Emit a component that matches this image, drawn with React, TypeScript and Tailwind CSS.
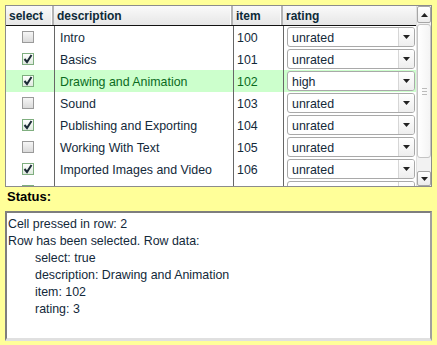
import React from 'react';

type Row = { select: boolean; description: string; item: string; rating: string };

const rows: Row[] = [
  { select: false, description: 'Intro', item: '100', rating: 'unrated' },
  { select: true, description: 'Basics', item: '101', rating: 'unrated' },
  { select: true, description: 'Drawing and Animation', item: '102', rating: 'high' },
  { select: false, description: 'Sound', item: '103', rating: 'unrated' },
  { select: true, description: 'Publishing and Exporting', item: '104', rating: 'unrated' },
  { select: false, description: 'Working With Text', item: '105', rating: 'unrated' },
  { select: true, description: 'Imported Images and Video', item: '106', rating: 'unrated' },
  // last row is cut by the viewport, only its top shows
  { select: true, description: '', item: '', rating: '' },
];

const SELECTED = 2;

function CheckBox({ checked }: { checked: boolean }) {
  return (
    <div
      className={`w-[12px] h-[12px] border flex items-center justify-center ${
        checked
          ? 'border-[#7fae7f] bg-gradient-to-b from-[#ffffff] to-[#dfe9df]'
          : 'border-[#9a9a9a] bg-gradient-to-b from-[#f6f6f6] to-[#dadada]'
      }`}
    >
      {checked && (
        <svg width="10" height="10" viewBox="0 0 10 10">
          <path d="M1.5 5 L4 8 L8.5 1" fill="none" stroke="#1c2b36" strokeWidth="2" />
        </svg>
      )}
    </div>
  );
}

function Arrow({ up = false }: { up?: boolean }) {
  return (
    <svg width="7" height="4" viewBox="0 0 7 4">
      <path d={up ? 'M0 4 L3.5 0 L7 4 Z' : 'M0 0 L7 0 L3.5 4 Z'} fill="#222" />
    </svg>
  );
}

function Combo({ value }: { value: string }) {
  return (
    <div className="h-[20px] ml-[3px] mr-[1px] flex border border-[#a9a9a9] rounded-[3px] bg-white overflow-hidden">
      <div className="flex-1 pl-[4px] pt-[2px] flex items-center">{value}</div>
      <div className="w-[16px] border-l border-[#d6d6d6] bg-gradient-to-b from-[#ffffff] to-[#eeeeee] flex items-center justify-center">
        <Arrow />
      </div>
    </div>
  );
}

function HeaderCell({ label, className }: { label: string; className: string }) {
  return (
    <div className={`${className} h-full flex items-center pl-[3px] pt-[1px] border-r-2 border-r-[#b4b4b4] shadow-[inset_-1px_0_0_#ffffff]`}>
      {label}
    </div>
  );
}

export default function App() {
  return (
    <div
      className="w-[437px] h-[345px] bg-[#ffff99] px-[5px] pt-[5px] flex flex-col text-[12.4px] text-[#13293a] overflow-hidden"
      style={{ fontFamily: '"Liberation Sans", Arial, sans-serif' }}
    >
      <div className="h-[182px] border border-[#8c8c8c] flex bg-white">
        <div className="flex-1 flex flex-col overflow-hidden">
          <div className="h-[20px] shrink-0 flex text-[12px] font-bold text-[#0d2a38] bg-gradient-to-b from-[#fafafa] to-[#e6e6e6] border-b border-b-[#111]">
            <HeaderCell label="select" className="w-[48px]" />
            <HeaderCell label="description" className="w-[179px]" />
            <HeaderCell label="item" className="w-[50px]" />
            <div className="flex-1 h-full flex items-center pl-[3px] pt-[1px]">rating</div>
          </div>
          <div className="flex-1 flex flex-col overflow-hidden">
            {rows.map((r, i) => {
              const sel = i === SELECTED;
              return (
                <div
                  key={i}
                  className={`h-[22px] shrink-0 flex ${sel ? 'bg-[#ccffcc] text-[#0b6b1e]' : ''}`}
                >
                  <div className="w-[48px] ml-[1px] flex items-center pl-[15px] border-r border-[#666]">
                    <CheckBox checked={r.select} />
                  </div>
                  <div className="w-[179px] flex items-center pl-[5px] pt-[2px] border-r border-[#666]">{r.description}</div>
                  <div className="w-[50px] flex items-center pl-[3px] pt-[2px] border-r border-[#666]">{r.item}</div>
                  <div className="flex-1 flex items-center text-[#13293a]">
                    <div className="w-full">
                      <Combo value={r.rating} />
                    </div>
                  </div>
                </div>
              );
            })}
          </div>
        </div>
        <div className="w-[15px] flex flex-col bg-[#f2f2f2] border-l border-[#e0e0e0]">
          <div className="h-[17px] border border-[#a6a6a6] rounded-[2px] bg-gradient-to-b from-[#ffffff] to-[#ececec] flex items-center justify-center">
            <Arrow up />
          </div>
          <div className="flex-1 relative">
            <div className="absolute inset-x-0 top-[1px] bottom-[13px] border border-[#c4c4c4] rounded-[3px] bg-gradient-to-r from-[#ffffff] to-[#f4f4f4] flex flex-col items-center justify-center gap-[2px]">
              <div className="w-[5px] h-px bg-[#bbb]" />
              <div className="w-[5px] h-px bg-[#bbb]" />
              <div className="w-[5px] h-px bg-[#bbb]" />
            </div>
          </div>
          <div className="h-[15px] border border-[#a6a6a6] rounded-[2px] bg-gradient-to-b from-[#ffffff] to-[#ececec] flex items-center justify-center">
            <Arrow />
          </div>
        </div>
      </div>
      <div className="h-[24px] flex items-center pl-[2px] pb-[4px] font-bold text-[13px] text-black">Status:</div>
      <div className="h-[130px] border-t-2 border-l-2 border-t-[#7e7e7e] border-l-[#7e7e7e] border-b-[3px] border-r-2 border-b-[#e0e0e0] border-r-[#a0a0a0] bg-white pl-[1px] pt-[3px] leading-[17px]">
        <div>Cell pressed in row: 2</div>
        <div>Row has been selected. Row data:</div>
        <div className="pl-[27px]">select: true</div>
        <div className="pl-[27px]">description: Drawing and Animation</div>
        <div className="pl-[27px]">item: 102</div>
        <div className="pl-[27px]">rating: 3</div>
      </div>
    </div>
  );
}
